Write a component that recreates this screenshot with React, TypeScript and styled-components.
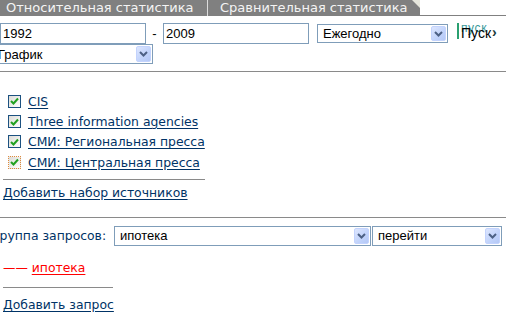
import React from "react";
import styled, { createGlobalStyle } from "styled-components";

const GlobalStyle = createGlobalStyle`
  html, body {
    margin: 0;
    padding: 0;
    background: #fff;
  }
  body {
    font-family: "DejaVu Sans", Verdana, sans-serif;
    font-size: 12.4px;
    color: #003366;
    overflow: hidden;
  }
`;

const Page = styled.div`
  width: 506px;
  height: 314px;
  overflow: hidden;
`;

const TabBar = styled.div`
  display: flex;
  height: 15px;
  border-bottom: 1px solid #808080;
`;

const Tabs = styled.div`
  position: relative;
  display: flex;
  width: 420px;
  height: 16px;
  background: #808080;
`;

const Tab = styled.div<{ $w: number; $sep?: boolean }>`
  width: ${(p) => p.$w}px;
  box-sizing: border-box;
  padding-left: ${(p) => (p.$sep ? 6 : 12)}px;
  border-right: ${(p) => (p.$sep ? "1px solid #dcdcdc" : "none")};
  color: #f4f4f4;
  font-size: 13px;
  line-height: 16px;
  white-space: nowrap;
`;

const Corner = styled.div`
  position: absolute;
  right: 0;
  top: 0;
  width: 0;
  height: 0;
  border-top: 8px solid #e6e6dc;
  border-left: 8px solid transparent;
`;

const FormRow = styled.div<{ $top?: number }>`
  display: flex;
  align-items: center;
  margin-top: ${(p) => p.$top ?? 0}px;
`;

const TextInput = styled.input<{ $w: number }>`
  box-sizing: border-box;
  width: ${(p) => p.$w}px;
  height: 21px;
  margin: 0;
  padding: 0 2px;
  border: 1px solid #7f9db9;
  font-family: "Liberation Sans", Arial, sans-serif;
  font-size: 13px;
  color: #000;
  outline: none;
`;

const Dash = styled.span`
  width: 17px;
  text-align: center;
  font-family: "Liberation Sans", Arial, sans-serif;
  font-size: 13px;
  color: #000;
`;

const SelectBox = styled.div<{ $w: number; $h: number; $ml?: number }>`
  position: relative;
  box-sizing: border-box;
  width: ${(p) => p.$w}px;
  height: ${(p) => p.$h}px;
  margin-left: ${(p) => p.$ml ?? 0}px;
  border: 1px solid #7f9db9;
  background: #fff;
  display: flex;
  align-items: center;
  padding-left: 5px;
  font-family: "Liberation Sans", Arial, sans-serif;
  font-size: 13px;
  color: #000;
  white-space: nowrap;
  flex-shrink: 0;
`;

const ArrowBtn = styled.span`
  position: absolute;
  right: 1px;
  top: 1px;
  bottom: 1px;
  width: 15px;
  box-sizing: border-box;
  border: 1px solid #c3d3fd;
  border-radius: 2px;
  background: linear-gradient(135deg, #dde6fe 0%, #c1d3fb 60%, #b4c8f6 100%);
  display: flex;
  align-items: center;
  justify-content: center;
`;

const Select = ({ value, w, h, ml }: { value: string; w: number; h: number; ml?: number }) => (
  <SelectBox $w={w} $h={h} $ml={ml}>
    {value}
    <ArrowBtn>
      <svg width="9" height="6" viewBox="0 0 9 6">
        <path d="M1 1 L4.5 4.5 L8 1" fill="none" stroke="#4d6185" strokeWidth="2" />
      </svg>
    </ArrowBtn>
  </SelectBox>
);

const GoButton = styled.div`
  position: relative;
  margin-left: 9px;
  width: 49px;
  height: 16px;
  align-self: flex-start;
  font-family: "Liberation Sans", Arial, sans-serif;
  font-size: 14px;
  color: #000;
  line-height: 16px;
  padding-left: 2px;
  box-sizing: border-box;
  border-left: 2px solid #2aa070;
  white-space: nowrap;
`;

const GoSmall = styled.span`
  position: absolute;
  left: 2px;
  top: -1px;
  font-size: 12px;
  line-height: 12px;
  color: #3a9a9a;
  letter-spacing: 0.6px;
`;

const GoText = styled.span`
  position: relative;
  top: 2px;
`;

const GoArrow = styled.span`
  position: relative;
  top: 1px;
  margin-left: 1px;
  font-weight: bold;
  color: #1a3a3a;
`;

const Rule = styled.div<{ $w?: number; $top: number; $ml?: number }>`
  height: 1px;
  background: #8a8a8a;
  width: ${(p) => (p.$w ? `${p.$w}px` : "auto")};
  margin-top: ${(p) => p.$top}px;
  margin-left: ${(p) => p.$ml ?? 0}px;
`;

const SourceList = styled.div`
  margin-top: 19px;
  padding-left: 8px;
`;

const SourceRow = styled.div`
  display: flex;
  align-items: center;
  height: 20.4px;
  gap: 7px;
`;

const Check = styled.span<{ $focus?: boolean }>`
  position: relative;
  box-sizing: border-box;
  width: 13px;
  height: 13px;
  border: 1px ${(p) => (p.$focus ? "dotted #e08a3c" : "solid #1c5180")};
  background: linear-gradient(135deg, #dcdcd7 0%, #f4f4f2 70%, #fff 100%);
  display: flex;
  align-items: center;
  justify-content: center;
`;

const Link = styled.a<{ $red?: boolean }>`
  color: ${(p) => (p.$red ? "#ff0000" : "#003366")};
  text-decoration: underline;
  text-underline-offset: 2px;
  cursor: pointer;
  white-space: nowrap;
`;

const LinkLine = styled.div<{ $top: number; $red?: boolean }>`
  margin-top: ${(p) => p.$top}px;
  margin-left: 3px;
  line-height: 16px;
  color: ${(p) => (p.$red ? "#ff0000" : "#003366")};
  white-space: nowrap;
`;

const QueryLabel = styled.span`
  margin-left: -8px;
  width: 122px;
  flex-shrink: 0;
  white-space: nowrap;
  color: #003366;
`;

const sources = [
  "CIS",
  "Three information agencies",
  "СМИ: Региональная пресса",
  "СМИ: Центральная пресса",
];

export default function App() {
  return (
    <Page>
      <GlobalStyle />
      <TabBar>
        <Tabs>
          <Tab $w={208} $sep>Относительная статистика</Tab>
          <Tab $w={212}>Сравнительная статистика</Tab>
          <Corner />
        </Tabs>
      </TabBar>

      <FormRow $top={7}>
        <TextInput $w={146} defaultValue="1992" />
        <Dash>-</Dash>
        <TextInput $w={146} defaultValue="2009" />
        <Select value="Ежегодно" w={131} h={19} ml={8} />
        <GoButton>
          <GoSmall>пуск</GoSmall>
          <GoText>Пуск</GoText>
          <GoArrow>›</GoArrow>
        </GoButton>
      </FormRow>
      <FormRow>
        <Select value="График" w={161} h={20} ml={-8} />
      </FormRow>

      <Rule $top={7} />

      <SourceList>
        {sources.map((s, i) => (
          <SourceRow key={s}>
            <Check $focus={i === sources.length - 1}>
              <svg width="9" height="8" viewBox="0 0 9 8">
                <path d="M1 4 L3.5 6.5 L8 1.5" fill="none" stroke="#21a121" strokeWidth="2" />
              </svg>
            </Check>
            <Link>{s}</Link>
          </SourceRow>
        ))}
      </SourceList>

      <Rule $top={6} $w={202} $ml={3} />
      <LinkLine $top={5}>
        <Link>Добавить набор источников</Link>
      </LinkLine>

      <Rule $top={16} />

      <FormRow $top={8}>
        <QueryLabel>Группа запросов:</QueryLabel>
        <Select value="ипотека" w={257} h={20} />
        <Select value="перейти" w={130} h={20} ml={1} />
      </FormRow>

      <LinkLine $top={14} $red>
        —— <Link $red>ипотека</Link>
      </LinkLine>

      <Rule $top={11} $w={110} $ml={3} />
      <LinkLine $top={9}>
        <Link>Добавить запрос</Link>
      </LinkLine>
    </Page>
  );
}
